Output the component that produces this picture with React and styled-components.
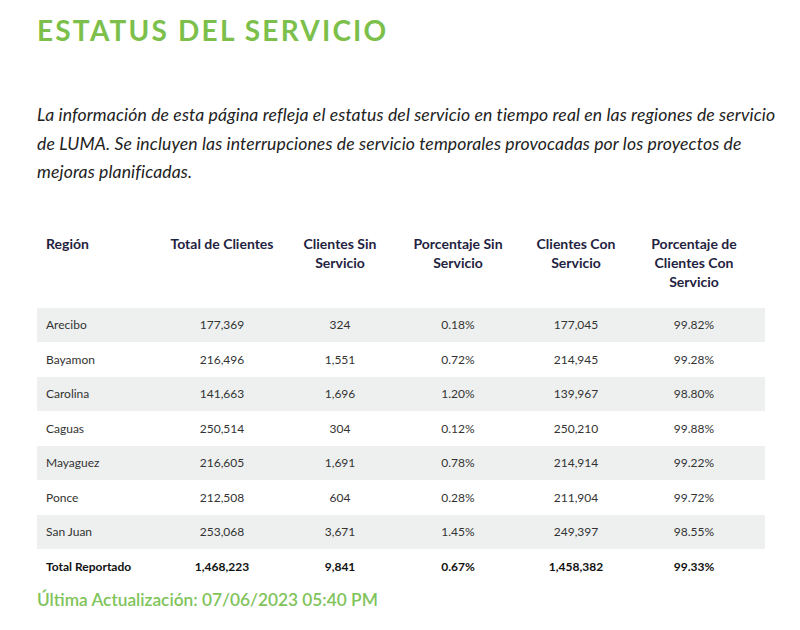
import React from 'react'
import styled, { createGlobalStyle } from 'styled-components'

const GlobalStyle = createGlobalStyle`
  body {
    margin: 0;
    background: #fff;
    font-family: 'Lato', 'Open Sans', sans-serif;
  }
`

const Page = styled.div`
  width: 800px;
  padding: 13px 0 0 37px;
  box-sizing: border-box;
`

const Title = styled.h1`
  margin: 0;
  font-family: 'Lato', sans-serif;
  font-size: 28px;
  font-weight: 700;
  letter-spacing: 2.2px;
  color: #7cbf4a;
  line-height: 34px;
`

const Intro = styled.p`
  margin: 54px 0 0;
  white-space: nowrap;
  font-family: 'Lato', sans-serif;
  font-style: italic;
  font-size: 17.6px;
  letter-spacing: 0.12px;
  line-height: 28.5px;
  color: #222;
`

const Table = styled.div`
  margin-top: 40px;
  width: 728px;
`

const Row = styled.div`
  display: grid;
  grid-template-columns: 126px repeat(5, 118px) 12px;
  align-items: ${p => (p.$head ? 'start' : 'center')};
  height: ${p => (p.$head ? 'auto' : '34.5px')};
  padding: ${p => (p.$head ? '7px 0 17px' : '0')};
  background: ${p => (p.$shade ? '#eef0ef' : 'transparent')};
`

const HeadCell = styled.div`
  font-family: 'Lato', sans-serif;
  font-size: 14px;
  font-weight: 700;
  line-height: 19px;
  color: #1f2341;
  text-align: ${p => (p.$left ? 'left' : 'center')};
  padding-left: ${p => (p.$left ? '9px' : '0')};
`

const Cell = styled.div`
  font-family: 'Lato', sans-serif;
  font-size: 12px;
  font-weight: ${p => (p.$bold ? 700 : 400)};
  color: ${p => (p.$bold ? '#111' : '#333')};
  text-align: ${p => (p.$left ? 'left' : 'center')};
  padding-left: ${p => (p.$left ? '9px' : '0')};
`

const Updated = styled.div`
  margin-top: 5px;
  font-family: 'Lato', sans-serif;
  font-size: 17.3px;
  font-weight: 600;
  color: #7fc35b;
`

const headers = [
  'Región',
  'Total de Clientes',
  <>Clientes Sin<br />Servicio</>,
  <>Porcentaje Sin<br />Servicio</>,
  <>Clientes Con<br />Servicio</>,
  <>Porcentaje de<br />Clientes Con<br />Servicio</>,
]

const rows = [
  ['Arecibo', '177,369', '324', '0.18%', '177,045', '99.82%'],
  ['Bayamon', '216,496', '1,551', '0.72%', '214,945', '99.28%'],
  ['Carolina', '141,663', '1,696', '1.20%', '139,967', '98.80%'],
  ['Caguas', '250,514', '304', '0.12%', '250,210', '99.88%'],
  ['Mayaguez', '216,605', '1,691', '0.78%', '214,914', '99.22%'],
  ['Ponce', '212,508', '604', '0.28%', '211,904', '99.72%'],
  ['San Juan', '253,068', '3,671', '1.45%', '249,397', '98.55%'],
]

const total = ['Total Reportado', '1,468,223', '9,841', '0.67%', '1,458,382', '99.33%']

export default function App() {
  return (
    <Page>
      <GlobalStyle />
      <Title>ESTATUS DEL SERVICIO</Title>
      <Intro>
        La información de esta página refleja el estatus del servicio en tiempo real en las regiones de servicio
        <br />
        de LUMA. Se incluyen las interrupciones de servicio temporales provocadas por los proyectos de
        <br />
        mejoras planificadas.
      </Intro>
      <Table>
        <Row $head>
          {headers.map((h, i) => (
            <HeadCell key={i} $left={i === 0}>{h}</HeadCell>
          ))}
        </Row>
        {rows.map((r, ri) => (
          <Row key={r[0]} $shade={ri % 2 === 0}>
            {r.map((c, i) => (
              <Cell key={i} $left={i === 0}>{c}</Cell>
            ))}
          </Row>
        ))}
        <Row>
          {total.map((c, i) => (
            <Cell key={i} $left={i === 0} $bold>{c}</Cell>
          ))}
        </Row>
      </Table>
      <Updated>Última Actualización: 07/06/2023 05:40 PM</Updated>
    </Page>
  )
}
